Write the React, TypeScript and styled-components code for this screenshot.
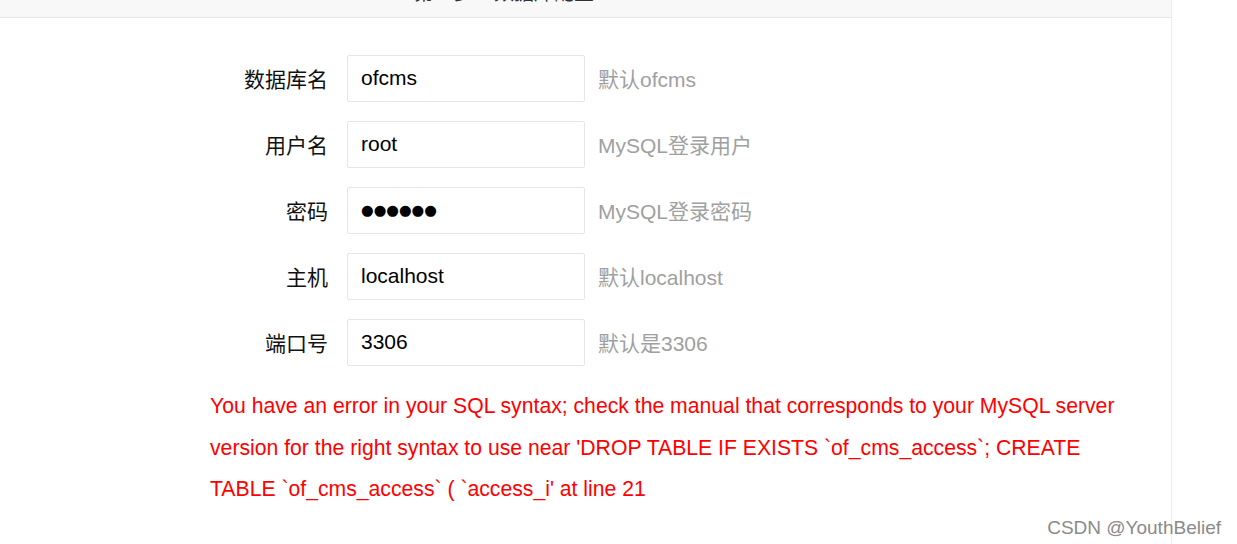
import styled, { createGlobalStyle } from "styled-components";

const GlobalStyle = createGlobalStyle`
    html, body {
        margin: 0;
        padding: 0;
        background: #ffffff;
    }
    body {
        font-family: "Liberation Sans", Arial, "Noto Sans CJK SC", sans-serif;
    }
`;

const Page = styled.div`
    position: relative;
    height: 544px;
    overflow: hidden;
    background: #ffffff;
`;

const Panel = styled.div`
    width: 1172px;
    height: 100%;
    border-right: 1px solid #ececec;
    box-sizing: border-box;
`;

const Header = styled.div`
    height: 17px;
    overflow: hidden;
    background: #f8f8f8;
    border-bottom: 1px solid #e6e6e6;
    padding-left: 414px;
`;

const Title = styled.div`
    margin-top: -17px;
    font-size: 20px;
    line-height: 20px;
    color: #333333;
`;

const Form = styled.div`
    display: flex;
    flex-direction: column;
    gap: 20px;
    padding: 37px 0 0 210px;
`;

const Row = styled.div`
    display: flex;
    align-items: center;
    height: 46px;
`;

const Label = styled.label`
    width: 118px;
    margin-right: 19px;
    text-align: right;
    font-size: 21px;
    color: #111111;
`;

const Input = styled.input<{ $masked?: boolean }>`
    width: 238px;
    height: 47px;
    box-sizing: border-box;
    border: 1px solid #e6e6e6;
    border-radius: 2px;
    padding: 0 13px;
    font-family: ${(p) => (p.$masked ? `"DejaVu Sans", sans-serif` : `"Liberation Sans", Arial, "Noto Sans CJK SC", sans-serif`)};
    font-size: ${(p) => (p.$masked ? "14.5px" : "21px")};
    color: #000000;
    background: #ffffff;
    outline: none;
`;

const Hint = styled.span`
    margin-left: 13px;
    font-size: 21px;
    color: #a0a0a0;
`;

const ErrorText = styled.p`
    margin: 0;
    width: 930px;
    font-size: 21.2px;
    line-height: 41.6px;
    color: #ff0000;
`;

const Watermark = styled.div`
    position: absolute;
    right: 16px;
    bottom: 5px;
    font-size: 19px;
    color: #8a8a8a;
    text-shadow: 0 0 1px #ffffff;
`;

const fields = [
    { label: "数据库名", value: "ofcms", hint: "默认ofcms", masked: false },
    { label: "用户名", value: "root", hint: "MySQL登录用户", masked: false },
    { label: "密码", value: "●●●●●●", hint: "MySQL登录密码", masked: true },
    { label: "主机", value: "localhost", hint: "默认localhost", masked: false },
    { label: "端口号", value: "3306", hint: "默认是3306", masked: false },
];

const App = (): JSX.Element => {
    return (
        <Page>
            <GlobalStyle />
            <Panel>
                <Header>
                    <Title>第二步：数据库配置</Title>
                </Header>
                <Form>
                    {fields.map((f) => (
                        <Row key={f.label}>
                            <Label>{f.label}</Label>
                            <Input type="text" $masked={f.masked} value={f.value} readOnly />
                            <Hint>{f.hint}</Hint>
                        </Row>
                    ))}
                    <ErrorText>
                        You have an error in your SQL syntax; check the manual that corresponds to your MySQL server
                        version for the right syntax to use near 'DROP TABLE IF EXISTS `of_cms_access`; CREATE
                        TABLE `of_cms_access` ( `access_i' at line 21
                    </ErrorText>
                </Form>
            </Panel>
            <Watermark>CSDN @YouthBelief</Watermark>
        </Page>
    );
};

export default App;
